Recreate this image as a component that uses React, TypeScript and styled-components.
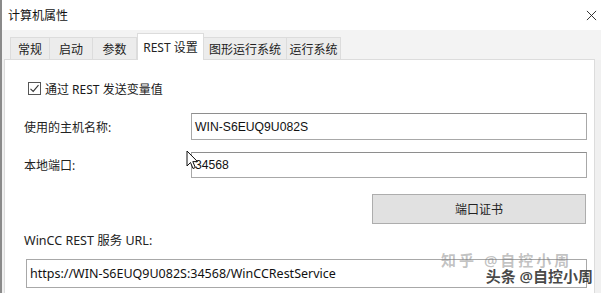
import React from "react";
import styled, { createGlobalStyle } from "styled-components";

const GlobalStyle = createGlobalStyle`
  html, body {
    margin: 0;
    padding: 0;
    background: #f0f0f0;
  }
  body {
    font-family: "Noto Sans", "Noto Sans CJK SC", sans-serif;
    color: #1a1a1a;
  }
`;

const tabs = [
  { label: "常规", width: 40 },
  { label: "启动", width: 43 },
  { label: "参数", width: 44 },
  { label: "REST 设置", width: 67 },
  { label: "图形运行系统", width: 83 },
  { label: "运行系统", width: 54 },
];

const App = (): JSX.Element => {
  return (
    <>
      <GlobalStyle />
      <Window>
        <TitleBar>
          <span>计算机属性</span>
          <CloseIcon viewBox="0 0 12 12">
            <path d="M1 1 L11 11 M11 1 L1 11" stroke="#222" strokeWidth="1" fill="none" />
          </CloseIcon>
        </TitleBar>

        <TabStrip>
          {tabs.map((t) => (
            <Tab key={t.label} active={t.label === "REST 设置"} w={t.width}>
              {t.label}
            </Tab>
          ))}
        </TabStrip>

        <Panel>
          <CheckRow>
            <CheckBox viewBox="0 0 13 13">
              <rect x="0.5" y="0.5" width="12" height="12" fill="#fff" stroke="#555" />
              <path d="M2.5 6.8 L5.2 9.4 L10.5 3.2" stroke="#333" strokeWidth="1.1" fill="none" />
            </CheckBox>
            <span>通过 REST 发送变量值</span>
          </CheckRow>

          <FieldRow top={18}>
            <Label>使用的主机名称:</Label>
            <Input h={27}>WIN-S6EUQ9U082S</Input>
          </FieldRow>

          <FieldRow top={12}>
            <Label>本地端口:</Label>
            <Input h={26}>34568</Input>
          </FieldRow>

          <ButtonRow>
            <Button>端口证书</Button>
          </ButtonRow>

          <UrlLabel>WinCC REST 服务 URL:</UrlLabel>
          <UrlInput>https://WIN-S6EUQ9U082S:34568/WinCCRestService</UrlInput>
        </Panel>

        <Cursor viewBox="0 0 13 20">
          <path
            d="M1 1 L1 16 L4.5 12.5 L7 18.5 L9.3 17.5 L6.8 11.6 L11.5 11.6 Z"
            fill="#fff"
            stroke="#111"
            strokeWidth="1"
            strokeLinejoin="round"
          />
        </Cursor>

        <Watermark>
          <WatermarkBack>知乎 @自控小周</WatermarkBack>
          <WatermarkFront>头条 @自控小周</WatermarkFront>
        </Watermark>
      </Window>
    </>
  );
};

export default App;

const Window = styled.div`
  position: relative;
  width: 601px;
  height: 293px;
  overflow: hidden;
  background: #f0f0f0;
  border-left: 2px solid #8a8a8a;
  box-sizing: border-box;
`;

const TitleBar = styled.div`
  height: 30px;
  background: #fff;
  display: flex;
  align-items: center;
  justify-content: space-between;
  padding: 0 4px 0 6px;
  font-size: 12px;
  color: #111;
`;

const CloseIcon = styled.svg`
  width: 11px;
  height: 11px;
`;

const TabStrip = styled.div`
  height: 30px;
  display: flex;
  align-items: flex-end;
  padding-left: 8px;
  background: #f3f3f3;
`;

const Tab = styled.div<{ active: boolean; w: number }>`
  width: ${(p) => p.w}px;
  height: ${(p) => (p.active ? "27px" : "23px")};
  display: flex;
  align-items: center;
  justify-content: center;
  box-sizing: border-box;
  font-size: 12px;
  color: #222;
  background: ${(p) => (p.active ? "#fff" : "#ececec")};
  border: 1px solid #dcdcdc;
  border-left: ${(p) => (p.active ? "1px solid #dcdcdc" : "none")};
  border-bottom: ${(p) => (p.active ? "none" : "1px solid #dcdcdc")};
  position: relative;
  z-index: ${(p) => (p.active ? 1 : 0)};
  &:first-child {
    border-left: 1px solid #dcdcdc;
  }
`;

const Panel = styled.div`
  background: #fff;
  border: 1px solid #dcdcdc;
  margin: -1px 6px 0 2px;
  padding: 22px 7px 20px 19px;
  height: 260px;
  box-sizing: border-box;
`;

const CheckRow = styled.div`
  display: flex;
  align-items: center;
  gap: 4px;
  padding-left: 4px;
  font-size: 12px;
  height: 13px;
`;

const CheckBox = styled.svg`
  width: 13px;
  height: 13px;
`;

const FieldRow = styled.div<{ top: number }>`
  display: grid;
  grid-template-columns: 167px 1fr;
  align-items: center;
  margin-top: ${(p) => p.top}px;
`;

const Label = styled.div`
  font-size: 12px;
  color: #222;
`;

const Input = styled.div<{ h: number }>`
  height: ${(p) => p.h}px;
  box-sizing: border-box;
  border: 1px solid #a8a8a8;
  border-top-color: #8e8e8e;
  display: flex;
  align-items: center;
  padding-left: 3px;
  font-family: "Liberation Sans", "Noto Sans CJK SC", sans-serif;
  font-size: 12.2px;
  color: #111;
  background: #fff;
`;

const ButtonRow = styled.div`
  display: flex;
  justify-content: flex-end;
  margin-top: 16px;
  padding-right: 1px;
`;

const Button = styled.div`
  width: 214px;
  height: 30px;
  box-sizing: border-box;
  background: #e1e1e1;
  border: 1px solid #adadad;
  display: flex;
  align-items: center;
  justify-content: center;
  font-size: 12px;
  color: #222;
`;

const UrlLabel = styled.div`
  margin-top: 10px;
  font-size: 12.5px;
  color: #222;
  height: 14px;
  line-height: 14px;
`;

const UrlInput = styled.div`
  margin-top: 11px;
  margin-left: 2px;
  height: 29px;
  box-sizing: border-box;
  border: 1px solid #a8a8a8;
  display: flex;
  align-items: center;
  padding-left: 3px;
  font-size: 12.5px;
  color: #111;
`;

const Cursor = styled.svg`
  position: absolute;
  left: 184px;
  top: 150px;
  width: 13px;
  height: 20px;
`;

const Watermark = styled.div`
  position: absolute;
  right: 8px;
  bottom: 8px;
  width: 152px;
  height: 32px;
  font-size: 15px;
  line-height: 15px;
  pointer-events: none;
`;

const WatermarkBack = styled.div`
  position: absolute;
  left: 0;
  top: 0;
  letter-spacing: 3px;
  color: rgba(120, 120, 120, 0.45);
  font-weight: 600;
`;

const WatermarkFront = styled.div`
  position: absolute;
  right: 0;
  top: 16px;
  color: rgba(40, 40, 40, 0.85);
  font-weight: 600;
`;
